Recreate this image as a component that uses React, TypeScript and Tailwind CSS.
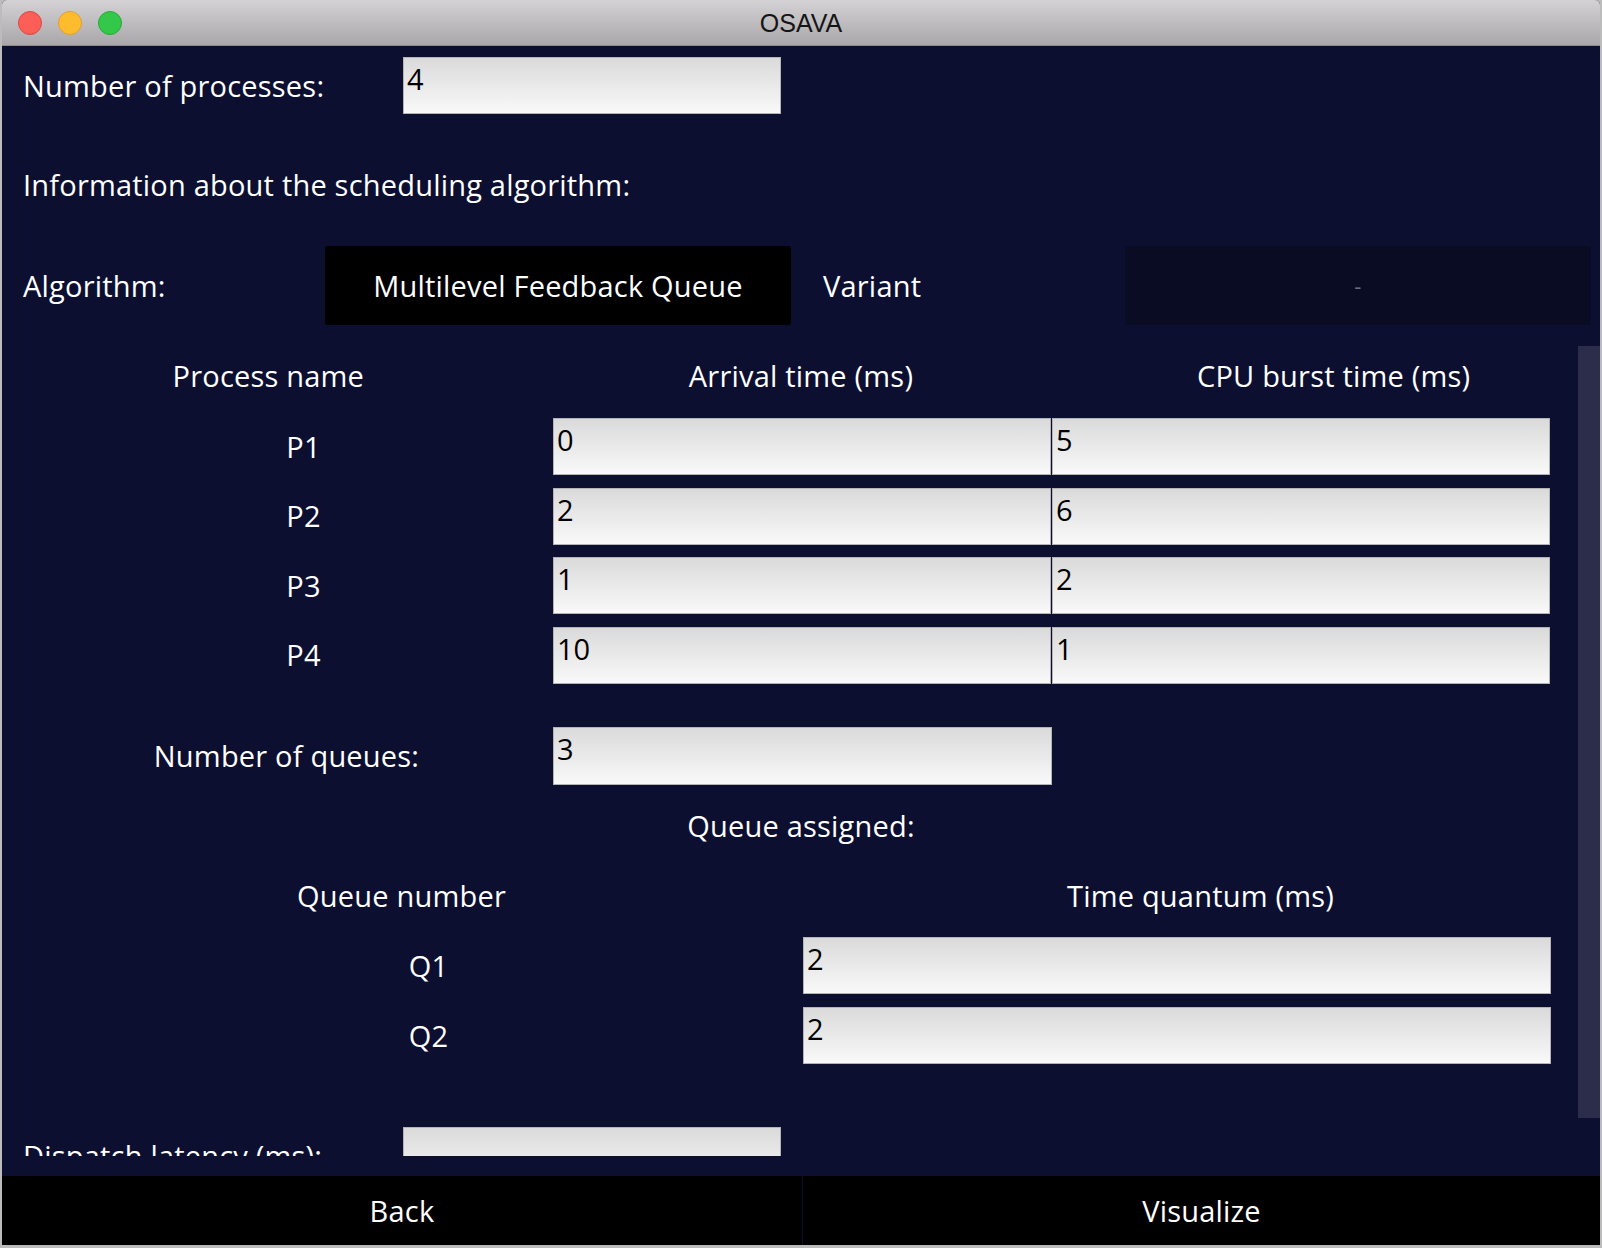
const processes = [
  { name: 'P1', arrival: '0', burst: '5' },
  { name: 'P2', arrival: '2', burst: '6' },
  { name: 'P3', arrival: '1', burst: '2' },
  { name: 'P4', arrival: '10', burst: '1' },
]

const queues = [
  { name: 'Q1', quantum: '2' },
  { name: 'Q2', quantum: '2' },
]

function Field({ value, className = '' }: { value: string; className?: string }) {
  return (
    <div
      className={`h-full border border-[#b4b4b4] bg-linear-to-b from-[#dadada] to-[#f9f9f9] pl-[3px] pt-px text-[29px] leading-[40px] tracking-normal text-black ${className}`}
    >
      {value}
    </div>
  )
}

function TitleBar() {
  return (
    <div className="relative flex h-[46px] shrink-0 items-center gap-[16px] border-b border-[#8d8b8d] bg-linear-to-b from-[#d4d2d4] to-[#a9a7a9] pl-[16px]">
      <span className="h-[24px] w-[24px] rounded-full border border-[#df4744] bg-[#fc5f57]" />
      <span className="h-[24px] w-[24px] rounded-full border border-[#de9f34] bg-[#fdbc2e]" />
      <span className="h-[24px] w-[24px] rounded-full border border-[#27aa35] bg-[#34c84a]" />
      <div className="absolute inset-0 flex items-center justify-center pt-[3px] font-['Liberation_Sans',sans-serif] text-[25px] tracking-normal text-[#151515]">
        OSAVA
      </div>
    </div>
  )
}

export default function App() {
  return (
    <div className="h-[1248px] w-[1602px] bg-[#bcbcbc] px-[2px] pb-[3px] font-['Open_Sans',sans-serif] text-[29px] tracking-[0.2px] text-white">
      <div className="flex h-full flex-col overflow-hidden rounded-t-[5px] bg-[#0c0f30]">
        <TitleBar />

        {/* fixed header part */}
        <div className="h-[299px] shrink-0 pt-[11px]">
          <div className="flex h-[57px] items-center pl-[21px]">
            <span className="w-[380px]">Number of processes:</span>
            <div className="h-full w-[378px]">
              <Field value="4" />
            </div>
          </div>
          <div className="mt-[32px] flex h-[78px] items-center pl-[21px]">
            Information about the scheduling algorithm:
          </div>
          <div className="mt-[22px] flex h-[79px] items-center pl-[21px]">
            <span className="w-[302px]">Algorithm:</span>
            <div className="flex h-full w-[466px] items-center justify-center rounded-[3px] bg-black">
              Multilevel Feedback Queue
            </div>
            <span className="w-[334px] pl-[32px]">Variant</span>
            <div className="flex h-full w-[466px] items-center justify-center rounded-[2px] bg-[#0a0c23] text-[22px] text-[#6a6c84]">
              -
            </div>
          </div>
        </div>

        {/* scrolling part */}
        <div className="relative h-[811px] shrink-0 overflow-hidden">
          <div className="grid h-[62px] grid-cols-3 items-center text-center">
            <span>Process name</span>
            <span>Arrival time (ms)</span>
            <span>CPU burst time (ms)</span>
          </div>

          <div className="mt-[11px] flex flex-col gap-[12.5px] pl-[52px]">
            {processes.map((p) => (
              <div key={p.name} className="flex h-[57px] items-center">
                <span className="w-[499px] text-center">{p.name}</span>
                <div className="h-full w-[498px]">
                  <Field value={p.arrival} />
                </div>
                <div className="ml-px h-full w-[498px]">
                  <Field value={p.burst} />
                </div>
              </div>
            ))}
          </div>

          <div className="mt-[43.5px] flex h-[58px] items-center pl-[52px]">
            <span className="w-[499px] pr-[34px] text-center">Number of queues:</span>
            <div className="h-full w-[499px]">
              <Field value="3" />
            </div>
          </div>

          <div className="mt-[10px] flex h-[62px] items-center justify-center">Queue assigned:</div>

          <div className="mt-[8px] grid h-[62px] grid-cols-2 items-center text-center">
            <span>Queue number</span>
            <span>Time quantum (ms)</span>
          </div>

          <div className="mt-[10px] flex flex-col gap-[13px] pl-[52px]">
            {queues.map((q) => (
              <div key={q.name} className="flex h-[57px] items-center">
                <span className="w-[749px] text-center">{q.name}</span>
                <div className="h-full w-[748px]">
                  <Field value={q.quantum} />
                </div>
              </div>
            ))}
          </div>

          <div className="mt-[63px] flex h-[57px] items-center pl-[21px]">
            <span className="w-[380px]">Dispatch latency (ms):</span>
            <div className="h-full w-[378px]">
              <Field value="" />
            </div>
          </div>

          <div className="absolute right-0 top-px h-[772px] w-[22px] bg-[#2b2d4a]" />
        </div>

        <div className="h-[20px] shrink-0" />

        <div className="flex h-[69px] shrink-0 gap-px">
          <button className="flex w-[800px] items-center justify-center bg-black">Back</button>
          <button className="flex flex-1 items-center justify-center bg-black">Visualize</button>
        </div>
      </div>
    </div>
  )
}
